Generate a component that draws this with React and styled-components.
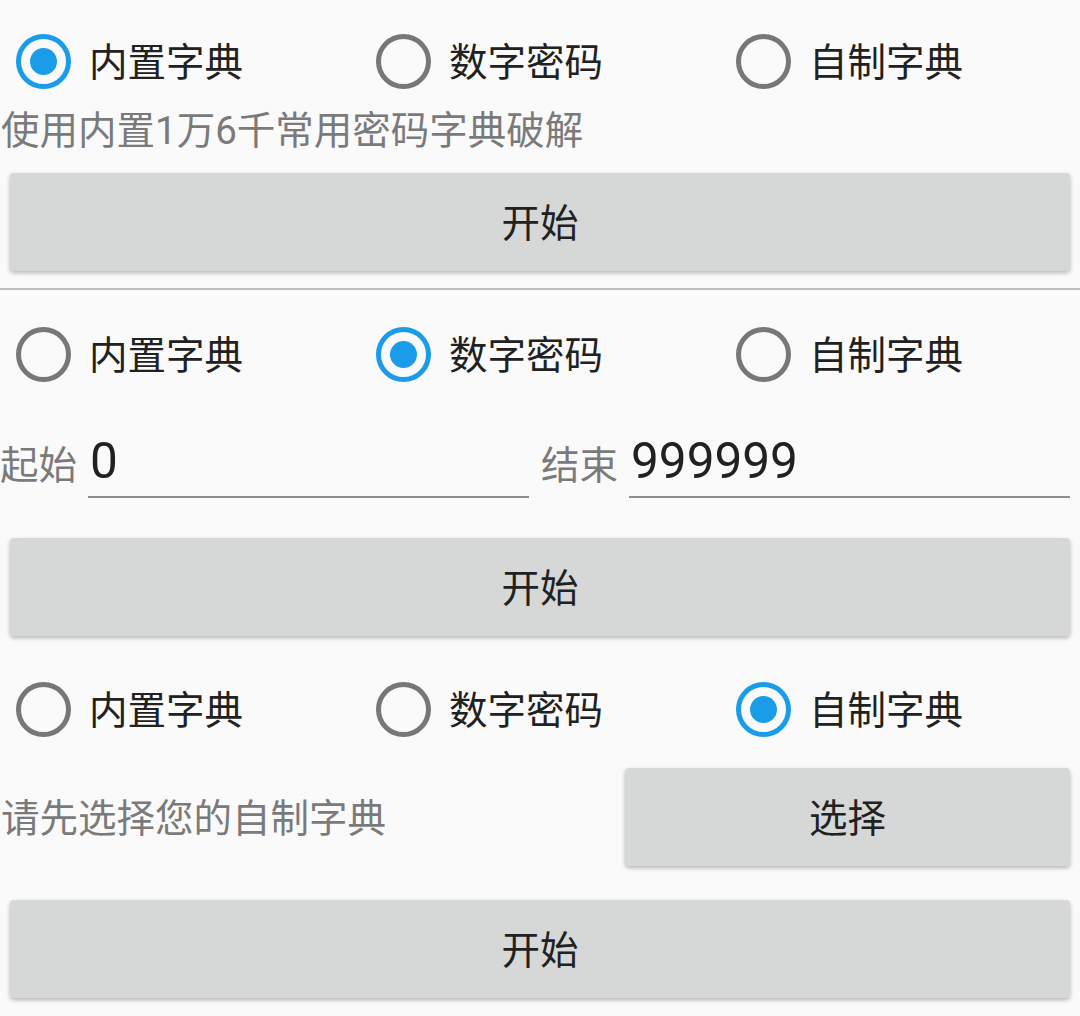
import styled, { createGlobalStyle } from 'styled-components';

const GlobalStyle = createGlobalStyle`
  html, body {
    margin: 0;
    padding: 0;
    background: #fafafa;
    font-family: Roboto, 'Noto Sans CJK SC', sans-serif;
  }
`;

const MODES = ['内置字典', '数字密码', '自制字典'];

const Page = styled.div`
  width: 1080px;
  height: 1016px;
  overflow: hidden;
  background: #fafafa;
`;

const Section = styled.section`
  display: flex;
  flex-direction: column;
`;

const RadioRow = styled.div`
  display: grid;
  grid-template-columns: repeat(3, 360px);
  height: 100px;
  margin-top: ${(p) => p.$top}px;
`;

const RadioItem = styled.label`
  display: flex;
  align-items: center;
  padding-left: 16px;
  gap: 18px;
  font-size: 38.5px;
  color: #212121;
`;

const LabelText = styled.span`
  padding-bottom: 5px;
`;

const Circle = styled.span`
  box-sizing: border-box;
  width: 55px;
  height: 55px;
  border-radius: 50%;
  border: 5px solid ${(p) => (p.$checked ? '#1b9ce9' : '#777777')};
  display: flex;
  align-items: center;
  justify-content: center;

  &::after {
    content: '';
    width: 27px;
    height: 27px;
    border-radius: 50%;
    background: #1b9ce9;
    display: ${(p) => (p.$checked ? 'block' : 'none')};
  }
`;

const Hint = styled.div`
  font-size: 38.5px;
  line-height: 40px;
  color: #7a7a7a;
  padding-left: 1px;
`;

const Button = styled.button`
  box-sizing: border-box;
  height: 98px;
  margin: ${(p) => p.$top || 0}px 10px 0;
  border: 0;
  border-radius: 4px;
  background: #d6d7d7;
  box-shadow: 0 2px 4px rgba(0, 0, 0, 0.28);
  font-family: inherit;
  font-size: 38.5px;
  color: #212121;
  padding: 0 0 4px;
`;

const Divider = styled.hr`
  margin: 17px 0 0;
  border: 0;
  height: 2px;
  background: #bdbdbd;
`;

const InputRow = styled.div`
  display: flex;
  align-items: stretch;
  margin-top: 16px;
  padding-right: 10px;
`;

const FieldLabel = styled.span`
  display: flex;
  align-items: center;
  padding-top: 6px;
  width: 77px;
  margin-left: ${(p) => p.$left}px;
  margin-right: 11px;
  font-size: 38.5px;
  color: #7a7a7a;
`;

const Field = styled.div`
  flex: 1;
  box-sizing: border-box;
  height: 78px;
  display: flex;
  align-items: center;
  padding: 6px 0 0 2px;
  border-bottom: 2px solid #8e8e8e;
  font-size: 49.5px;
  color: #212121;
`;

const ChooseRow = styled.div`
  display: flex;
  align-items: center;
  margin-top: 9px;
`;

const ChooseHint = styled(Hint)`
  flex: 1;
  padding-top: 4px;
`;

const ChooseButton = styled(Button)`
  width: 445px;
  margin: 0 10px 0 0;
`;

const Radios = ({ checked, top }) => (
  <RadioRow $top={top}>
    {MODES.map((m, i) => (
      <RadioItem key={m}>
        <Circle $checked={i === checked} />
        <LabelText>{m}</LabelText>
      </RadioItem>
    ))}
  </RadioRow>
);

export default function App() {
  return (
    <Page>
      <GlobalStyle />
      <Section>
        <Radios checked={0} top={11} />
        <Hint>使用内置1万6千常用密码字典破解</Hint>
        <Button $top={22}>开始</Button>
        <Divider />
      </Section>
      <Section>
        <Radios checked={1} top={14} />
        <InputRow>
          <FieldLabel $left={0}>起始</FieldLabel>
          <Field>0</Field>
          <FieldLabel $left={12}>结束</FieldLabel>
          <Field>999999</Field>
        </InputRow>
        <Button $top={40}>开始</Button>
      </Section>
      <Section>
        <Radios checked={2} top={23} />
        <ChooseRow>
          <ChooseHint>请先选择您的自制字典</ChooseHint>
          <ChooseButton>选择</ChooseButton>
        </ChooseRow>
        <Button $top={34}>开始</Button>
      </Section>
    </Page>
  );
}
